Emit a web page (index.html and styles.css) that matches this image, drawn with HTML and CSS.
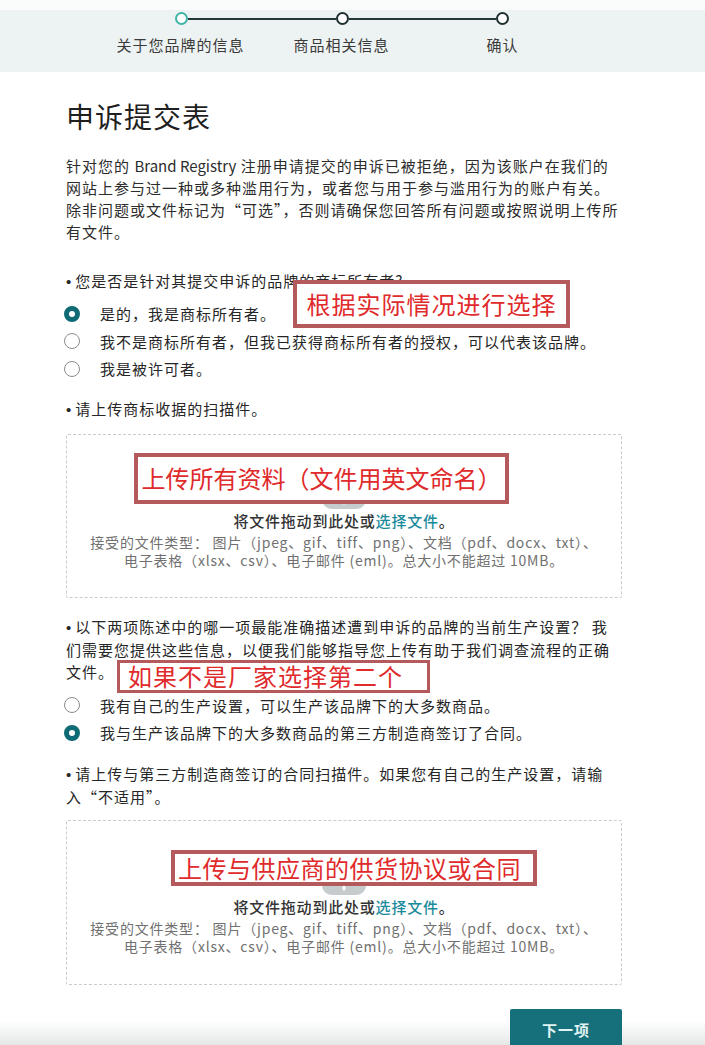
FILE: index.html
```html
<!DOCTYPE html>
<html lang="zh-CN">
<head>
<meta charset="utf-8">
<title>申诉提交表</title>
<link rel="stylesheet" href="styles.css">
</head>
<body>
<div class="topgap"></div>
<header class="progress">
  <div class="track">
    <span class="dot dot-active"></span><span class="seg"></span><span class="dot"></span><span class="seg"></span><span class="dot"></span>
  </div>
  <div class="step-labels">
    <span>关于您品牌的信息</span>
    <span>商品相关信息</span>
    <span>确认</span>
  </div>
</header>

<main class="form">
  <h1 class="title">申诉提交表</h1>
  <p class="intro">针对您的 <span class="latin">Brand Registry</span> 注册申请提交的申诉已被拒绝，因为该账户在我们的<br>网站上参与过一种或多种滥用行为，或者您与用于参与滥用行为的账户有关。<br>除非问题或文件标记为“可选”，否则请确保您回答所有问题或按照说明上传所<br>有文件。</p>

  <section class="q q-owner">
    <p class="question"><span class="bullet">•</span>您是否是针对其提交申诉的品牌的商标所有者?</p>
    <ul class="radios">
      <li class="radio-row"><span class="radio radio-on"></span><span>是的，我是商标所有者。</span></li>
      <li class="radio-row"><span class="radio"></span><span>我不是商标所有者，但我已获得商标所有者的授权，可以代表该品牌。</span></li>
      <li class="radio-row"><span class="radio"></span><span>我是被许可者。</span></li>
    </ul>
    <div class="note note-owner">根据实际情况进行选择</div>
  </section>

  <section class="q q-upload1">
    <p class="question"><span class="bullet">•</span>请上传商标收据的扫描件。</p>
    <div class="dropzone">
      <svg class="cloud" width="46" height="34" viewBox="0 0 46 34"><path d="M12 33 C5 33 1 28.5 1 23 C1 17.5 5 13.5 10.5 13.2 C12 6.5 17.5 2 24 2 C31 2 36.5 7 37.5 13.5 C42 14.3 45 18.3 45 23 C45 28.5 41 33 35 33 Z" fill="#c6cccd"/><path d="M23 27 V15 M18 20 L23 15 L28 20" stroke="#fff" stroke-width="3" fill="none" stroke-linecap="round" stroke-linejoin="round"/></svg>
      <p class="drop-main">将文件拖动到此处或<span class="link">选择文件</span>。</p>
      <p class="drop-hint">接受的文件类型： 图片（jpeg、gif、tiff、png）、文档（pdf、docx、txt）、<br>电子表格（xlsx、csv）、电子邮件 (eml)。总大小不能超过 10MB。</p>
      <div class="note note-files">上传所有资料（文件用英文命名）</div>
    </div>
  </section>

  <section class="q q-prod">
    <p class="question"><span class="bullet">•</span>以下两项陈述中的哪一项最能准确描述遭到申诉的品牌的当前生产设置？ 我<br>们需要您提供这些信息，以便我们能够指导您上传有助于我们调查流程的正确<br>文件。</p>
    <ul class="radios radios-tight">
      <li class="radio-row"><span class="radio"></span><span>我有自己的生产设置，可以生产该品牌下的大多数商品。</span></li>
      <li class="radio-row"><span class="radio radio-on"></span><span>我与生产该品牌下的大多数商品的第三方制造商签订了合同。</span></li>
    </ul>
    <div class="note note-factory">如果不是厂家选择第二个</div>
  </section>

  <section class="q q-upload2">
    <p class="question"><span class="bullet">•</span>请上传与第三方制造商签订的合同扫描件。如果您有自己的生产设置，请输<br>入“不适用”。</p>
    <div class="dropzone dropzone-2">
      <svg class="cloud" width="46" height="34" viewBox="0 0 46 34"><path d="M12 33 C5 33 1 28.5 1 23 C1 17.5 5 13.5 10.5 13.2 C12 6.5 17.5 2 24 2 C31 2 36.5 7 37.5 13.5 C42 14.3 45 18.3 45 23 C45 28.5 41 33 35 33 Z" fill="#c6cccd"/><path d="M23 27 V15 M18 20 L23 15 L28 20" stroke="#fff" stroke-width="3" fill="none" stroke-linecap="round" stroke-linejoin="round"/></svg>
      <p class="drop-main">将文件拖动到此处或<span class="link">选择文件</span>。</p>
      <p class="drop-hint">接受的文件类型： 图片（jpeg、gif、tiff、png）、文档（pdf、docx、txt）、<br>电子表格（xlsx、csv）、电子邮件 (eml)。总大小不能超过 10MB。</p>
      <div class="note note-contract">上传与供应商的供货协议或合同</div>
    </div>
  </section>

  <div class="actions">
    <button class="next" type="button">下一项</button>
  </div>
</main>
</body>
</html>
```
FILE: styles.css
```css
html {
  min-height: 100%;
  background: linear-gradient(to bottom, #ffffff 0, #ffffff 1020px, #e6e8e8 1045px);
}
body {
  margin: 0;
  font-family: "Noto Sans CJK SC", "Noto Sans", sans-serif;
  color: #2a2a2a;
}
p, ul, h1 { margin: 0; padding: 0; }
ul { list-style: none; }

.topgap {
  height: 10px;
  background: #fafbfb;
}
.progress {
  height: 62px;
  background: #edf2f2;
  box-sizing: border-box;
  padding-top: 2px;
}
.track {
  display: flex;
  align-items: center;
  margin-left: 175px;
  width: 334px;
}
.dot {
  width: 13px;
  height: 13px;
  box-sizing: border-box;
  border: 2px solid #1f2e31;
  border-radius: 50%;
  background: #fff;
  flex: none;
}
.dot-active { border-color: #3fb3a6; }
.seg {
  flex: 1;
  height: 2px;
  background: #26373a;
}
.step-labels {
  display: grid;
  grid-template-columns: 161px 161px 161px;
  margin-left: 100px;
  margin-top: 10px;
  font-size: 15px;
  line-height: 20px;
  letter-spacing: 1px;
  color: #3a3a3a;
  text-align: center;
}

.form {
  padding-left: 66px;
  width: 556px;
}
.title {
  margin-top: 26px;
  font-size: 28px;
  line-height: 36px;
  font-weight: normal;
  letter-spacing: 1px;
  color: #1f1f1f;
}
.intro {
  margin-top: 21px;
  font-size: 15px;
  line-height: 22px;
  letter-spacing: 1px;
  color: #2c2c2c;
  white-space: nowrap;
}
.latin { letter-spacing: 0; }
.q { position: relative; }
.question {
  font-size: 15px;
  line-height: 22px;
  letter-spacing: 1px;
  color: #262626;
  white-space: nowrap;
}
.bullet {
  font-family: "Liberation Sans", sans-serif;
  letter-spacing: 0;
  margin-right: 4px;
}
.q-owner { margin-top: 27px; }
.radios { margin-top: 7px; }
.radios-tight { margin-top: 9px; }
.radio-row {
  display: flex;
  align-items: center;
  gap: 20px;
  height: 27.5px;
  margin-left: -2px;
  font-size: 15px;
  letter-spacing: 1px;
  color: #262626;
  white-space: nowrap;
}
.radio {
  width: 16px;
  height: 16px;
  box-sizing: border-box;
  border: 1.5px solid #8c8c8c;
  border-radius: 50%;
  background: #fff;
  flex: none;
}
.radio-on { border: 5px solid #0e6a74; }

.q-upload1 { margin-top: 15px; }
.q-prod { margin-top: 18px; }
.q-upload2 { margin-top: 16px; }

.dropzone {
  position: relative;
  margin-top: 13px;
  height: 164px;
  box-sizing: border-box;
  border: 1.5px dashed #c9cccc;
  border-radius: 2px;
  display: flex;
  flex-direction: column;
  align-items: center;
  padding-top: 41px;
  text-align: center;
}
.dropzone-2 { margin-top: 12px; height: 165px; }
.cloud { display: block; }
.drop-main {
  margin-top: 2px;
  font-size: 15px;
  line-height: 18px;
  letter-spacing: 0.8px;
  color: #333;
  font-weight: 500;
}
.link { color: #1b8a9b; }
.drop-hint {
  margin-top: 3px;
  font-size: 14px;
  line-height: 18px;
  letter-spacing: 0.8px;
  color: #707070;
  white-space: nowrap;
}

.note {
  position: absolute;
  box-sizing: border-box;
  border: 4px solid #b55a5c;
  background: #fff;
  color: #e02a2b;
  font-size: 24px;
  line-height: 1;
  display: flex;
  align-items: center;
  justify-content: center;
  white-space: nowrap;
}
.note-owner { left: 227px; top: 10px; width: 277px; height: 48px; letter-spacing: 1px; }
.note-files { left: 67px; top: 18px; width: 375px; height: 51px; }
.note-factory { left: 51px; top: 44px; width: 313px; height: 33px; letter-spacing: 1px; border-width: 3px; justify-content: flex-start; padding-left: 8px; }
.note-contract { left: 104px; top: 29px; width: 366px; height: 36px; letter-spacing: 0.5px; justify-content: flex-start; padding-left: 3px; }

.actions {
  display: flex;
  justify-content: flex-end;
  margin-top: 24px;
}
.next {
  width: 112px;
  height: 42px;
  border: none;
  border-radius: 2px;
  background: #15707c;
  color: #e2f3f3;
  font-family: "Noto Sans CJK SC", sans-serif;
  font-size: 15px;
  font-weight: bold;
  letter-spacing: 1px;
}
```
